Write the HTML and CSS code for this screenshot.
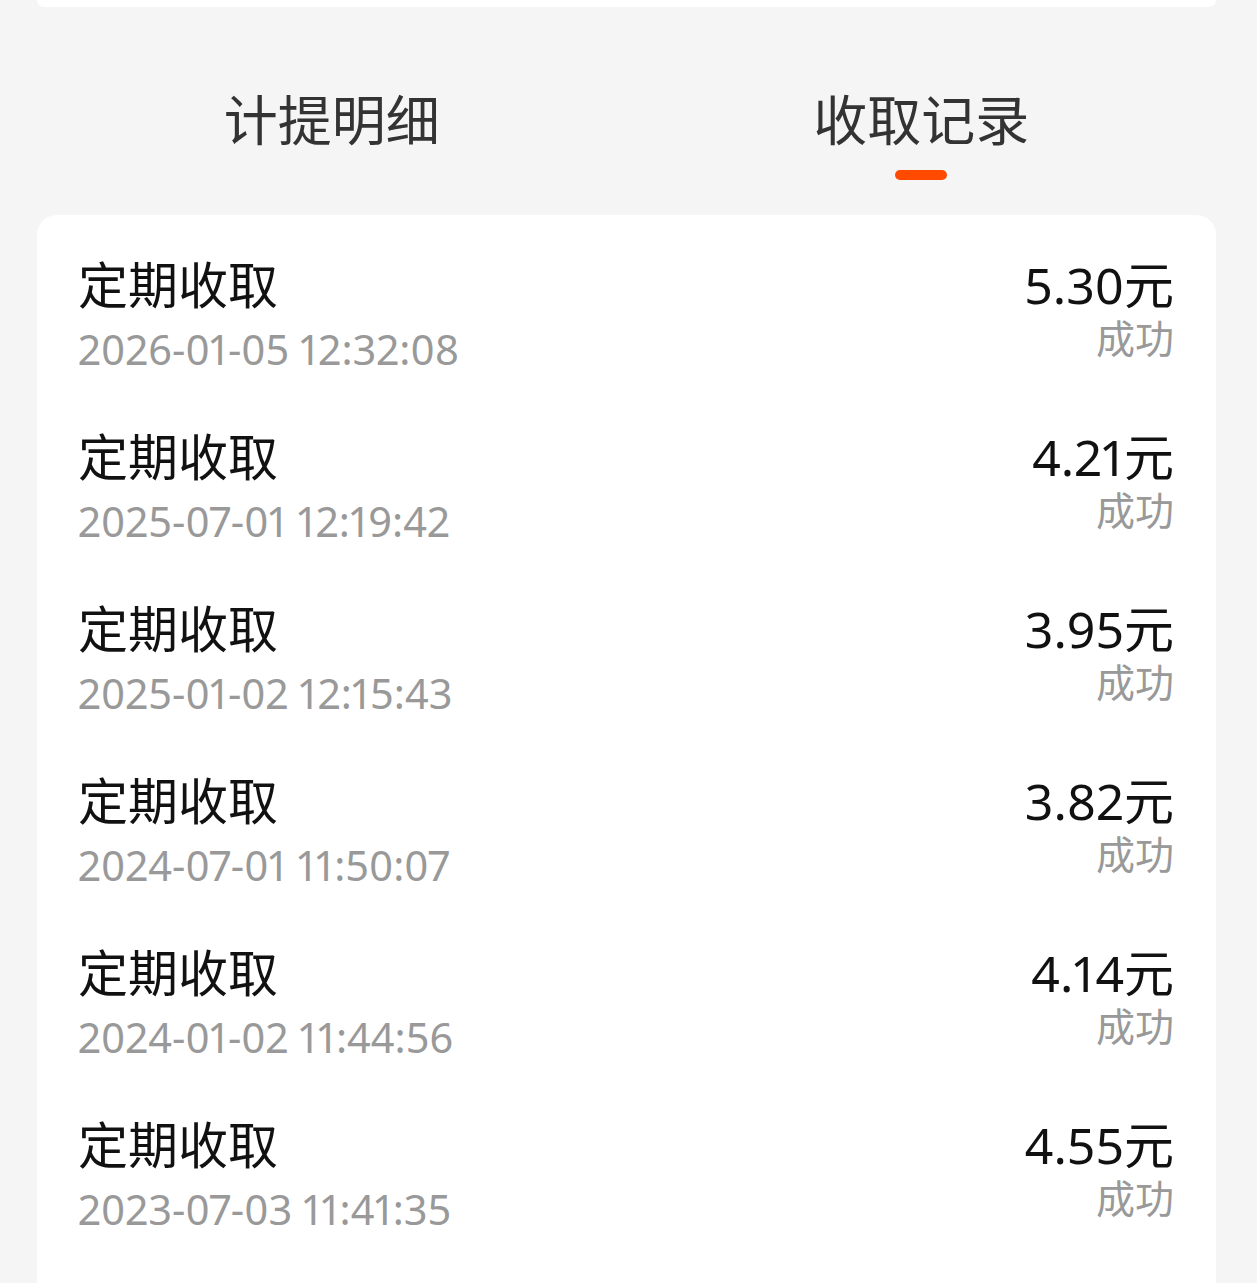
FILE: index.html
```html
<!DOCTYPE html>
<html lang="zh-CN">
<head>
    <meta charset="UTF-8">
    <meta name="viewport" content="width=device-width, initial-scale=1.0">
    <title>收取记录</title>
    <link rel="stylesheet" href="styles.css">
</head>
<body>
<div class="page">

    <!-- 上方卡片底边 -->
    <div class="top-card"></div>

    <!-- 标签切换 -->
    <div class="tabs">
        <div class="tab">
            <span class="tab-label">计提明细</span>
        </div>
        <div class="tab active">
            <span class="tab-label">收取记录</span>
            <span class="tab-bar"></span>
        </div>
    </div>

    <!-- 收取记录列表 -->
    <section class="card">
        <div class="row">
            <div class="row-left">
                <div class="row-title">定期收取</div>
                <div class="row-time">2026-01-05 12:32:08</div>
            </div>
            <div class="row-right">
                <div class="row-amount">5.30元</div>
                <div class="row-status">成功</div>
            </div>
        </div>
        <div class="row">
            <div class="row-left">
                <div class="row-title">定期收取</div>
                <div class="row-time">2025-07-01 12:19:42</div>
            </div>
            <div class="row-right">
                <div class="row-amount">4.21元</div>
                <div class="row-status">成功</div>
            </div>
        </div>
        <div class="row">
            <div class="row-left">
                <div class="row-title">定期收取</div>
                <div class="row-time">2025-01-02 12:15:43</div>
            </div>
            <div class="row-right">
                <div class="row-amount">3.95元</div>
                <div class="row-status">成功</div>
            </div>
        </div>
        <div class="row">
            <div class="row-left">
                <div class="row-title">定期收取</div>
                <div class="row-time">2024-07-01 11:50:07</div>
            </div>
            <div class="row-right">
                <div class="row-amount">3.82元</div>
                <div class="row-status">成功</div>
            </div>
        </div>
        <div class="row">
            <div class="row-left">
                <div class="row-title">定期收取</div>
                <div class="row-time">2024-01-02 11:44:56</div>
            </div>
            <div class="row-right">
                <div class="row-amount">4.14元</div>
                <div class="row-status">成功</div>
            </div>
        </div>
        <div class="row">
            <div class="row-left">
                <div class="row-title">定期收取</div>
                <div class="row-time">2023-07-03 11:41:35</div>
            </div>
            <div class="row-right">
                <div class="row-amount">4.55元</div>
                <div class="row-status">成功</div>
            </div>
        </div>
    </section>

</div>
</body>
</html>
```

FILE: styles.css
```css
body {
    margin: 0;
    font-family: 'Noto Sans', 'Noto Sans CJK SC', sans-serif;
    font-variant-numeric: proportional-nums;
    background-color: #f5f5f5;
}

.page {
    padding: 0 41px 0 37px;
}

.top-card {
    height: 7px;
    background-color: #fff;
    border-radius: 0 0 20px 20px;
}

.tabs {
    display: flex;
    padding: 77px 0 35px;
}

.tab {
    flex: 1;
    display: flex;
    flex-direction: column;
    align-items: center;
}

.tab-label {
    font-size: 54px;
    line-height: 72px;
    color: #333;
}

.tab-bar {
    width: 52px;
    height: 10px;
    margin-top: 14px;
    border-radius: 5px;
    background-color: #ff4a00;
}

.tab .tab-label {
    margin-bottom: 24px;
}

.tab.active .tab-label {
    margin-bottom: 0;
}

.card {
    background-color: #fff;
    border-radius: 20px;
    padding: 16px 42px 40px 41px;
}

.row {
    display: flex;
    justify-content: space-between;
    padding: 22px 0;
}

.row-title {
    font-size: 50px;
    line-height: 64px;
    color: #111;
}

.row-time {
    font-size: 41.5px;
    line-height: 64px;
    color: #999;
}

.row-right {
    padding-top: 4px;
    text-align: right;
}

.row-amount {
    font-size: 50px;
    line-height: 56px;
    color: #111;
}

.row-status {
    font-size: 39px;
    line-height: 50px;
    color: #999;
}
```
